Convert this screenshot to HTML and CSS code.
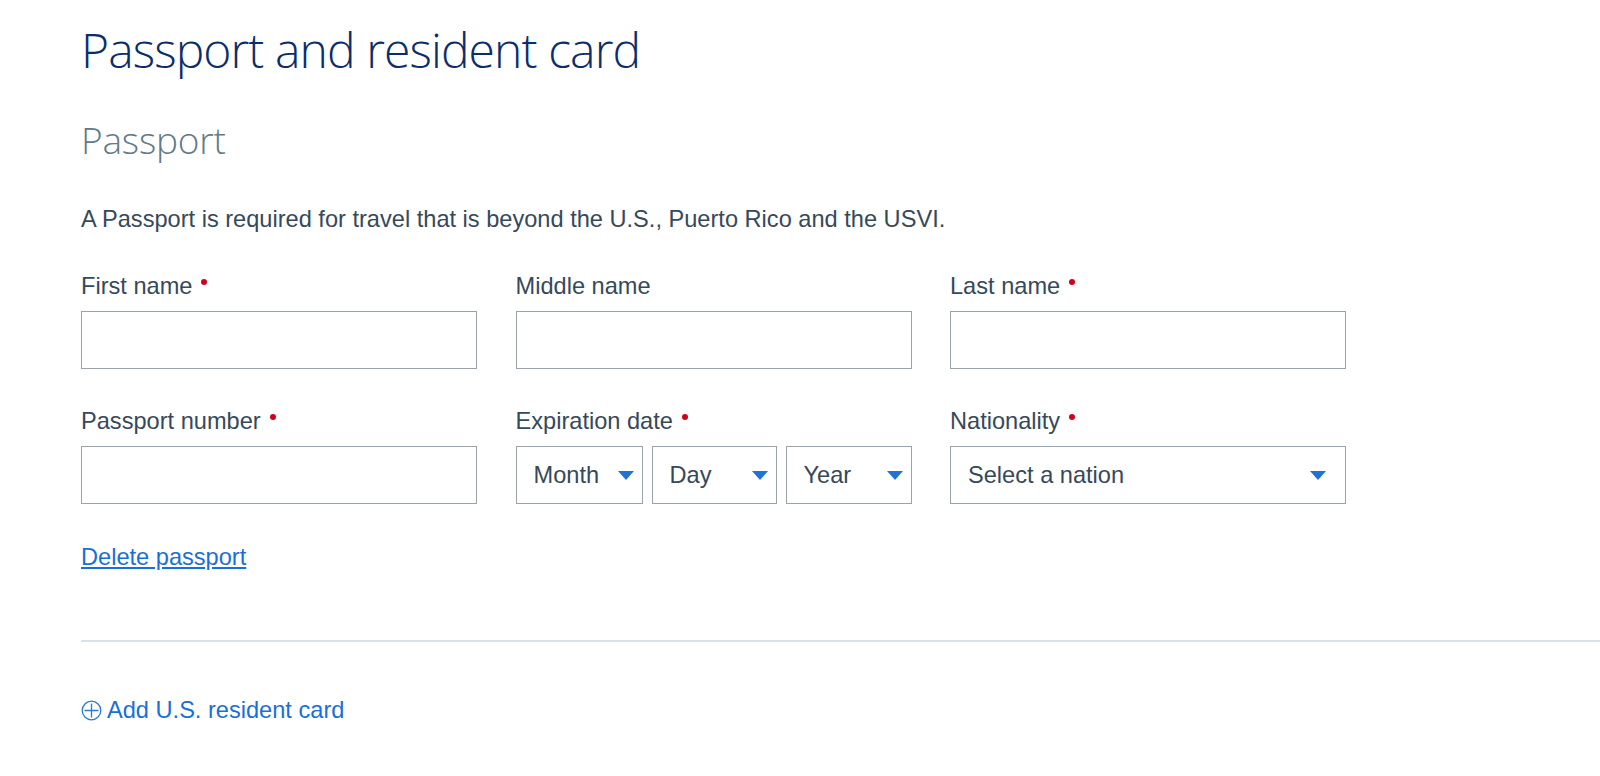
FILE: index.html
```html
<!DOCTYPE html>
<html lang="en">
<head>
<meta charset="utf-8">
<title>Passport and resident card</title>
<link rel="stylesheet" href="styles.css">
</head>
<body>
<main class="page">
  <h1 class="title">Passport and resident card</h1>
  <h2 class="subtitle">Passport</h2>
  <p class="intro">A Passport is required for travel that is beyond the U.S., Puerto Rico and the USVI.</p>

  <div class="grid">
    <div class="field">
      <label class="label">First name <span class="req"></span></label>
      <div class="input"></div>
    </div>
    <div class="field">
      <label class="label">Middle name</label>
      <div class="input"></div>
    </div>
    <div class="field">
      <label class="label">Last name <span class="req"></span></label>
      <div class="input"></div>
    </div>

    <div class="field">
      <label class="label">Passport number <span class="req"></span></label>
      <div class="input"></div>
    </div>
    <div class="field">
      <label class="label">Expiration date <span class="req"></span></label>
      <div class="dates">
        <div class="select month"><span>Month</span><i class="caret"></i></div>
        <div class="select day"><span>Day</span><i class="caret"></i></div>
        <div class="select year"><span>Year</span><i class="caret"></i></div>
      </div>
    </div>
    <div class="field">
      <label class="label">Nationality <span class="req"></span></label>
      <div class="select wide"><span>Select a nation</span><i class="caret"></i></div>
    </div>
  </div>

  <a class="delete" href="#">Delete passport</a>

  <hr class="divider">

  <a class="add" href="#">
    <svg class="plus" width="21" height="21" viewBox="0 0 21 21" aria-hidden="true">
      <circle cx="10.5" cy="10.5" r="9.3" fill="none" stroke="#2a7ad6" stroke-width="1.3"/>
      <path d="M10.5 3.5V17.5M3.5 10.5H17.5" stroke="#2a7ad6" stroke-width="1.3"/>
    </svg>
    <span>Add U.S. resident card</span>
  </a>
</main>
</body>
</html>
```
FILE: styles.css
```css
html, body {
  margin: 0;
  padding: 0;
  background: #ffffff;
}

body {
  font-family: "Liberation Sans", Arial, Helvetica, sans-serif;
  color: #36495a;
}

.page {
  padding: 22px 0 0 81px;
}

.title {
  margin: 0;
  font-family: "Open Sans", "Lato", sans-serif;
  font-weight: 300;
  font-size: 48px;
  line-height: 56px;
  color: #0c2d6b;
  letter-spacing: -0.9px;
}

.subtitle {
  margin: 40px 0 0;
  font-family: "Open Sans", "Lato", sans-serif;
  font-weight: 300;
  font-size: 37px;
  line-height: 44px;
  color: #627a88;
  letter-spacing: -0.2px;
}

.intro {
  margin: 43px 0 0;
  font-size: 23.6px;
  line-height: 28px;
}

.grid {
  margin-top: 39px;
  display: grid;
  grid-template-columns: 396px 396px 396px;
  column-gap: 38.5px;
  row-gap: 38px;
}

.field {
  display: flex;
  flex-direction: column;
}

.label {
  font-size: 23.6px;
  line-height: 28px;
  height: 28px;
  margin-bottom: 11px;
  display: flex;
  align-items: center;
}

.req {
  display: inline-block;
  width: 6px;
  height: 6px;
  border-radius: 50%;
  background: #d0021b;
  margin-left: 9px;
  margin-top: -8px;
}

.input {
  box-sizing: border-box;
  height: 58px;
  border: 1px solid #9aa3a9;
  background: #fff;
}

.dates {
  display: flex;
  gap: 9px;
}

.select {
  box-sizing: border-box;
  height: 58px;
  border: 1px solid #9aa3a9;
  display: flex;
  align-items: center;
  justify-content: space-between;
  padding: 0 8px 0 17px;
  font-size: 23.6px;
}

.select.month { width: 127px; }
.select.day { width: 125px; }
.select.year { width: 126px; }
.select.wide { width: 396px; padding-right: 19px; }

.caret {
  width: 0;
  height: 0;
  border-left: 8px solid transparent;
  border-right: 8px solid transparent;
  border-top: 9px solid #1f73d8;
}

.delete {
  display: inline-block;
  margin-top: 39px;
  font-size: 23.6px;
  line-height: 28px;
  color: #1a6fd6;
  text-decoration: underline;
  text-underline-offset: 2px;
}

.divider {
  margin: 69px 0 0;
  border: 0;
  height: 2px;
  background: #d9e2ea;
}

.add {
  margin-top: 54px;
  display: inline-flex;
  align-items: center;
  gap: 5px;
  font-size: 23.6px;
  line-height: 28px;
  color: #1a6fd6;
  text-decoration: none;
}

.plus {
  display: block;
}
```
